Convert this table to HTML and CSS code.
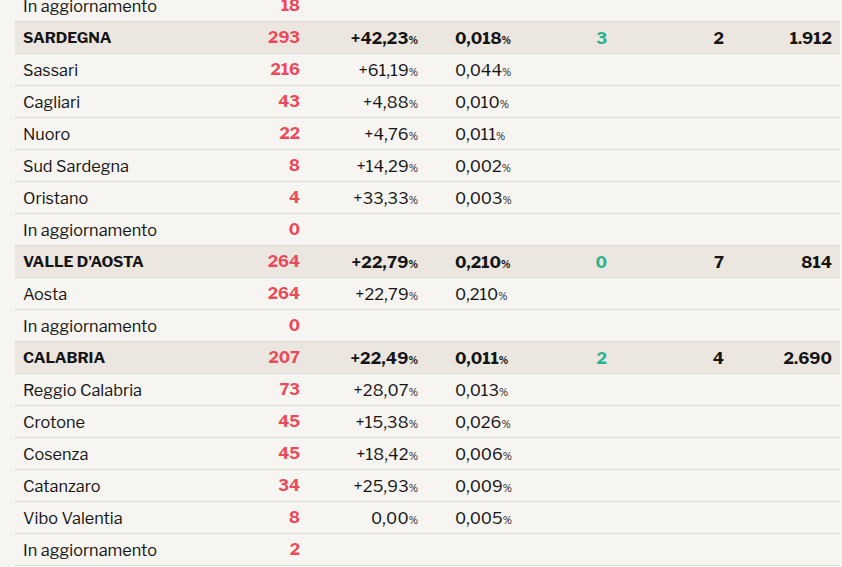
FILE: index.html
```html
<!DOCTYPE html>
<html lang="it">
<head>
<meta charset="utf-8">
<link rel="stylesheet" href="styles.css">
</head>
<body>
<div class="table">
  <div class="row"><span class="name">In aggiornamento</span><span class="cnt">18</span><span></span><span></span><span></span><span></span><span></span></div>

  <div class="row head"><span class="name">SARDEGNA</span><span class="cnt">293</span><span class="pct">+42,23<small>%</small></span><span class="pop">0,018<small>%</small></span><span class="grn">3</span><span class="num">2</span><span class="num">1.912</span></div>
  <div class="row"><span class="name">Sassari</span><span class="cnt">216</span><span class="pct">+61,19<small>%</small></span><span class="pop">0,044<small>%</small></span><span></span><span></span><span></span></div>
  <div class="row"><span class="name">Cagliari</span><span class="cnt">43</span><span class="pct">+4,88<small>%</small></span><span class="pop">0,010<small>%</small></span><span></span><span></span><span></span></div>
  <div class="row"><span class="name">Nuoro</span><span class="cnt">22</span><span class="pct">+4,76<small>%</small></span><span class="pop">0,011<small>%</small></span><span></span><span></span><span></span></div>
  <div class="row"><span class="name">Sud Sardegna</span><span class="cnt">8</span><span class="pct">+14,29<small>%</small></span><span class="pop">0,002<small>%</small></span><span></span><span></span><span></span></div>
  <div class="row"><span class="name">Oristano</span><span class="cnt">4</span><span class="pct">+33,33<small>%</small></span><span class="pop">0,003<small>%</small></span><span></span><span></span><span></span></div>
  <div class="row"><span class="name">In aggiornamento</span><span class="cnt">0</span><span></span><span></span><span></span><span></span><span></span></div>

  <div class="row head"><span class="name">VALLE D'AOSTA</span><span class="cnt">264</span><span class="pct">+22,79<small>%</small></span><span class="pop">0,210<small>%</small></span><span class="grn">0</span><span class="num">7</span><span class="num">814</span></div>
  <div class="row"><span class="name">Aosta</span><span class="cnt">264</span><span class="pct">+22,79<small>%</small></span><span class="pop">0,210<small>%</small></span><span></span><span></span><span></span></div>
  <div class="row"><span class="name">In aggiornamento</span><span class="cnt">0</span><span></span><span></span><span></span><span></span><span></span></div>

  <div class="row head"><span class="name">CALABRIA</span><span class="cnt">207</span><span class="pct">+22,49<small>%</small></span><span class="pop">0,011<small>%</small></span><span class="grn">2</span><span class="num">4</span><span class="num">2.690</span></div>
  <div class="row"><span class="name">Reggio Calabria</span><span class="cnt">73</span><span class="pct">+28,07<small>%</small></span><span class="pop">0,013<small>%</small></span><span></span><span></span><span></span></div>
  <div class="row"><span class="name">Crotone</span><span class="cnt">45</span><span class="pct">+15,38<small>%</small></span><span class="pop">0,026<small>%</small></span><span></span><span></span><span></span></div>
  <div class="row"><span class="name">Cosenza</span><span class="cnt">45</span><span class="pct">+18,42<small>%</small></span><span class="pop">0,006<small>%</small></span><span></span><span></span><span></span></div>
  <div class="row"><span class="name">Catanzaro</span><span class="cnt">34</span><span class="pct">+25,93<small>%</small></span><span class="pop">0,009<small>%</small></span><span></span><span></span><span></span></div>
  <div class="row"><span class="name">Vibo Valentia</span><span class="cnt">8</span><span class="pct">0,00<small>%</small></span><span class="pop">0,005<small>%</small></span><span></span><span></span><span></span></div>
  <div class="row"><span class="name">In aggiornamento</span><span class="cnt">2</span><span></span><span></span><span></span><span></span><span></span></div>
</div>
</body>
</html>
```
FILE: styles.css
```css
html, body {
  margin: 0;
  padding: 0;
  background: #f7f5f1;
}
body {
  font-family: "Libre Franklin", "Liberation Sans", Arial, sans-serif;
  color: #141414;
  font-size: 16.3px;
  font-variant-numeric: tabular-nums;
}
.table {
  margin: -10px 0 0 15px;
  width: 825px;
}
.row {
  display: grid;
  grid-template-columns: 223px 62px 118px 92px 97px 117px 108px;
  padding-right: 8px;
  height: 31px;
  align-items: center;
  border-bottom: 1px solid #dfdbd5;
}
.row.head {
  background: #ebe6e0;
  font-weight: bold;
}
.name {
  padding-left: 8px;
}
.head .name {
  font-size: 15.3px;
}
.cnt {
  text-align: right;
  color: #ea4a5a;
  font-weight: bold;
  font-size: 16px;
}
.pct, .grn, .num {
  text-align: right;
}
.pct {
  letter-spacing: 0.2px;
}
.pop {
  padding-left: 37px;
}
.pct small, .pop small {
  font-size: 10px;
  letter-spacing: 0;
}
.grn {
  color: #2ab38f;
}
```
